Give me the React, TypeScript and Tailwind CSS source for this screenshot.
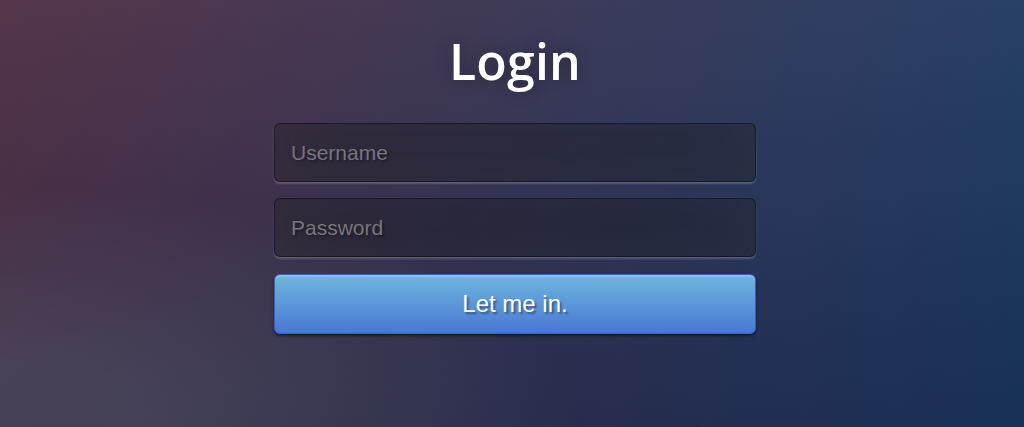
import React from "react";

export default function App() {
  return (
    <div className="w-full h-[427px] overflow-hidden bg-[#092756] bg-[image:radial-gradient(ellipse_at_0%_100%,rgba(104,128,138,.28)_10%,rgba(138,114,76,0)_40%),linear-gradient(to_bottom,rgba(57,173,219,.22)_0%,rgba(42,60,87,.4)_100%),linear-gradient(135deg,#5e1420_0%,#0b2756_100%)] flex justify-center pl-[6px]">
      <div className="w-[482px] flex flex-col pt-[30px]">
        <h1 className="text-center text-white text-[50px] leading-[62px] font-semibold tracking-[0.2px] [font-family:'Open_Sans',sans-serif] [text-shadow:0_0_16px_rgba(0,0,0,0.3)] mb-[31px]">
          Login
        </h1>
        <form className="flex flex-col" onSubmit={(e) => e.preventDefault()}>
          <input
            type="text"
            placeholder="Username"
            className="w-full h-[59px] mb-[16px] px-[16px] rounded-[6px] bg-[rgba(0,0,0,0.3)] border border-[rgba(0,0,0,0.3)] outline-none text-white text-[21px] [font-family:'Liberation_Sans',Arial,sans-serif] placeholder:text-[#77747f] [text-shadow:2px_2px_2px_rgba(0,0,0,0.3)] shadow-[inset_0_-8px_72px_rgba(100,100,100,0.2),0_2px_2px_rgba(255,255,255,0.2)]"
          />
          <input
            type="password"
            placeholder="Password"
            className="w-full h-[59px] mb-[17px] px-[16px] rounded-[6px] bg-[rgba(0,0,0,0.3)] border border-[rgba(0,0,0,0.3)] outline-none text-white text-[21px] [font-family:'Liberation_Sans',Arial,sans-serif] placeholder:text-[#77747f] [text-shadow:2px_2px_2px_rgba(0,0,0,0.3)] shadow-[inset_0_-8px_72px_rgba(100,100,100,0.2),0_2px_2px_rgba(255,255,255,0.2)]"
          />
          <button
            type="submit"
            className="w-full h-[60px] rounded-[6px] border border-[#3762bc] bg-[#4a77d4] bg-[image:linear-gradient(to_bottom,#6eb6de,#4a77d4)] text-white text-[24px] [font-family:'Liberation_Sans',Arial,sans-serif] [text-shadow:2px_2px_2px_rgba(0,0,0,0.4)] shadow-[inset_0_2px_0_rgba(255,255,255,0.2),0_2px_3px_rgba(0,0,0,0.5)]"
          >
            Let me in.
          </button>
        </form>
      </div>
    </div>
  );
}
